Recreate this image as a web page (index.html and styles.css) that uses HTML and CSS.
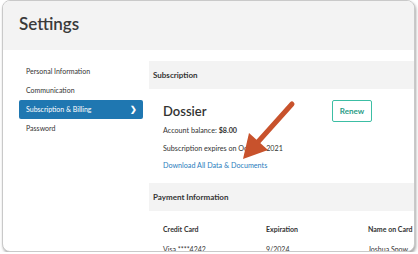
FILE: index.html
```html
<!DOCTYPE html>
<html lang="en">
<head>
    <meta charset="UTF-8">
    <title>Settings</title>
    <link rel="stylesheet" href="styles.css">
</head>
<body>
    <div class="window">
        <div class="title">Settings</div>
        <div class="layout">
            <ul class="side-nav">
                <li>Personal Information</li>
                <li>Communication</li>
                <li class="active">Subscription &amp; Billing <span class="chev">&#x276F;</span></li>
                <li>Password</li>
            </ul>
            <div class="main">
                <div class="section-head">Subscription</div>
                <div class="section-body">
                    <div class="plan-row">
                        <div class="plan-name">Dossier</div>
                        <button class="renew">Renew</button>
                    </div>
                    <p class="line first">Account balance: <b>$8.00</b></p>
                    <p class="line">Subscription expires on October 2021</p>
                    <p class="line"><a href="#" class="link">Download All Data &amp; Documents</a></p>
                </div>
                <div class="section-head">Payment Information</div>
                <div class="card-table">
                    <div class="row head">
                        <span class="c1">Credit Card</span>
                        <span class="c2">Expiration</span>
                        <span class="c3">Name on Card</span>
                    </div>
                    <div class="row">
                        <span class="c1">Visa ****4242</span>
                        <span class="c2">9/2024</span>
                        <span class="c3">Joshua Snow</span>
                    </div>
                </div>
            </div>
        </div>
        <!-- annotation arrow over the screenshot -->
        <svg class="arrow" width="418" height="254" viewBox="0 0 418 254">
            <line x1="292" y1="104" x2="257" y2="143" stroke="#c8522c" stroke-width="5" stroke-linecap="round"/>
            <polygon points="243,159 249,133 268,150" fill="#c8522c"/>
        </svg>
    </div>
</body>
</html>
```
FILE: styles.css
```css
/* settings screen */
body {
    margin: 0;
    padding: 0;
    background-color: #fff;
    font-family: Lato, "Open Sans", sans-serif;
    color: #333;
}
.window {
    box-sizing: border-box;
    margin: 0 3px 0 2px;
    height: 252px;
    border: 1px solid #c9c9c9;
    border-radius: 8px;
    box-shadow: 1px 2px 3px rgba(0, 0, 0, 0.35);
    overflow: hidden;
    background-color: #fff;
}
.title {
    height: 49px;
    background-color: #f3f3f3;
    font-size: 17px;
    font-weight: 600;
    color: #3a3a3a;
    padding-left: 16px;
    line-height: 45px;
}
.layout {
    display: flex;
}
.side-nav {
    list-style: none;
    margin: 0;
    padding: 12px 6px 0 16px;
    width: 124px;
    flex-shrink: 0;
}
.side-nav li {
    height: 19px;
    line-height: 19px;
    font-size: 7px;
    padding-left: 7px;
    color: #333;
    border-radius: 2px;
}
.side-nav li.active {
    background-color: #1f77b1;
    color: #fff;
    display: flex;
    justify-content: space-between;
    padding-right: 6px;
}
.chev {
    font-size: 8px;
    font-weight: bold;
}
.main {
    flex: 1;
    padding-top: 11px;
}
.section-head {
    height: 28px;
    line-height: 28px;
    background-color: #f3f3f3;
    font-size: 8px;
    font-weight: bold;
    padding-left: 4px;
    color: #333;
}
.section-body {
    padding: 11px 0 11px 14px;
}
.plan-row {
    display: flex;
    justify-content: space-between;
    align-items: center;
    width: 209px;
    height: 22px;
}
.plan-name {
    font-size: 13px;
    font-weight: 600;
    color: #333;
}
.renew {
    box-sizing: border-box;
    width: 40px;
    height: 22px;
    border: 1px solid #3cbea4;
    border-radius: 2px;
    background-color: #fff;
    color: #2a9c86;
    font-family: Lato, sans-serif;
    font-size: 8px;
    font-weight: bold;
    padding: 0;
}
.line {
    margin: 6px 0 0 0;
    font-size: 7.2px;
    line-height: 12px;
}
.line.first {
    margin-top: 3px;
}
.line:last-child {
    margin-top: 5px;
}
.link {
    color: #2a7dbd;
    text-decoration: none;
}
.card-table {
    padding: 12px 0 0 14px;
}
.row {
    display: flex;
    font-size: 7px;
    line-height: 12px;
    white-space: nowrap;
}
.row.head {
    font-weight: bold;
    margin-bottom: 8px;
}
.c1 {
    width: 103px;
}
.c2 {
    width: 102px;
}
.arrow {
    position: absolute;
    left: 0;
    top: 0;
    pointer-events: none;
}
```
